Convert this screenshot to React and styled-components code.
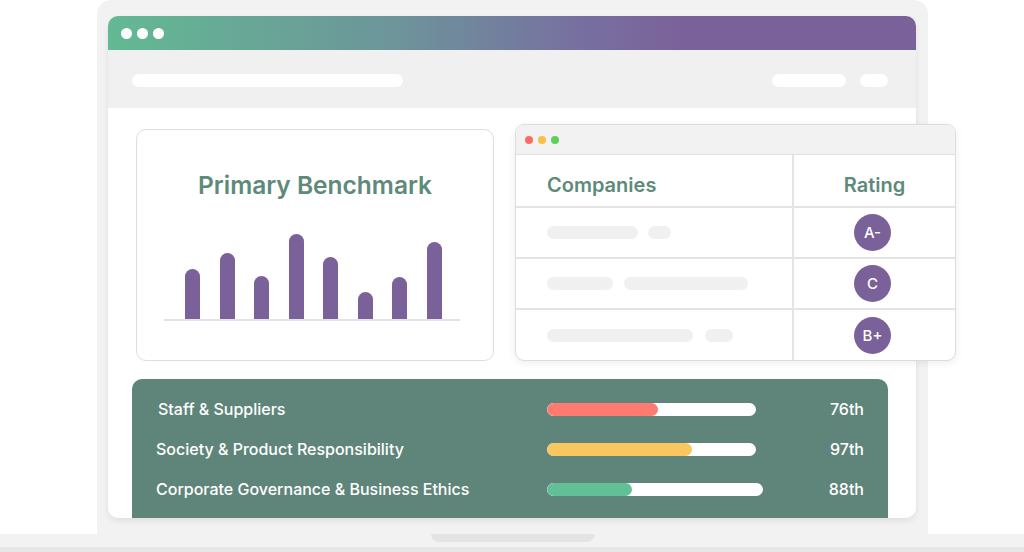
import React from 'react';
import styled, { createGlobalStyle } from 'styled-components';

const Global = createGlobalStyle`
  body {
    margin: 0;
    background: #fff;
    font-family: Inter, "Noto Sans", sans-serif;
  }
`;

const Page = styled.div`
  width: 1024px;
  height: 552px;
  overflow: hidden;
  background: #fff;
  display: flex;
  flex-direction: column;
`;

const Lid = styled.div`
  width: 831px;
  height: 534px;
  margin-left: 97px;
  box-sizing: border-box;
  padding: 16px 12px 16px 11px;
  background: #f2f2f2;
  border-radius: 14px 14px 0 0;
  display: flex;
`;

const Screen = styled.div`
  flex: 1;
  min-width: 0;
  background: #fff;
  border-radius: 10px;
  box-shadow: 0 3px 6px rgba(0, 0, 0, 0.08);
  display: flex;
  flex-direction: column;
`;

const TitleBar = styled.div`
  height: 34px;
  flex-shrink: 0;
  border-radius: 10px 10px 0 0;
  background: linear-gradient(90deg, #63b993 0%, #6d949a 36%, #7770a0 58%, #7b6199 72%, #7b6199 100%);
  display: flex;
  align-items: center;
  gap: 5px;
  padding-left: 13px;
`;

const Dot = styled.span`
  width: ${p => p.size}px;
  height: ${p => p.size}px;
  border-radius: 50%;
  background: ${p => p.color};
`;

const AddressBar = styled.div`
  height: 58px;
  flex-shrink: 0;
  box-sizing: border-box;
  background: #f0f0f0;
  display: flex;
  align-items: center;
  padding: 2px 28px 0 24px;
  gap: 14px;
`;

const Pill = styled.span`
  display: block;
  width: ${p => p.w}px;
  height: 13px;
  border-radius: 7px;
  background: ${p => p.bg || '#fff'};
  margin-right: ${p => (p.push ? 'auto' : '0')};
`;

const Content = styled.div`
  flex: 1;
  min-width: 0;
  display: flex;
  flex-direction: column;
  padding: 21px 28px 0 24px;
`;

const TopRow = styled.div`
  display: flex;
  align-items: flex-start;
  gap: 21px;
  padding-left: 4px;
`;

const ChartCard = styled.div`
  width: 358px;
  height: 232px;
  flex-shrink: 0;
  box-sizing: border-box;
  border: 1px solid #dedede;
  border-radius: 10px;
  display: flex;
  flex-direction: column;
  align-items: center;
  padding-top: 41px;
`;

const Heading = styled.h2`
  margin: 0;
  font-size: 24.5px;
  line-height: 29px;
  font-weight: 600;
  color: #5e8a7a;
`;

const Chart = styled.div`
  align-self: flex-start;
  margin: 31px 0 0 27px;
  width: 296px;
  height: 90px;
  box-sizing: border-box;
  padding: 0 18px 0 21px;
  display: flex;
  align-items: flex-end;
  justify-content: space-between;
  border-bottom: 2px solid #e3e3e3;
`;

const Bar = styled.span`
  width: 15px;
  border-radius: 8px 8px 0 0;
  background: #7b6199;
`;

const Window = styled.div`
  width: 441px;
  height: 237px;
  flex-shrink: 0;
  margin-top: -5px;
  box-sizing: border-box;
  border: 1px solid #dddddd;
  border-radius: 9px;
  background: #fff;
  overflow: hidden;
  box-shadow: 0 2px 8px rgba(0, 0, 0, 0.07);
  display: flex;
  flex-direction: column;
`;

const WindowBar = styled.div`
  height: 29px;
  flex-shrink: 0;
  background: #f2f2f2;
  border-bottom: 1px solid #e0e0e0;
  display: flex;
  align-items: center;
  gap: 5px;
  padding-left: 9px;
`;

const Table = styled.div`
  flex: 1;
  display: grid;
  grid-template-columns: 278px 1fr;
  grid-template-rows: 53px 51px 51px 1fr;
`;

const Cell = styled.div`
  display: flex;
  align-items: center;
  justify-content: ${p => (p.center ? 'center' : 'flex-start')};
  padding-left: ${p => (p.center ? '0' : '31px')};
  padding-top: ${p => (p.head ? '8px' : '0')};
  gap: ${p => p.gap || 10}px;
  border-right: ${p => (p.center ? 'none' : '2px solid #e4e4e4')};
  border-bottom: ${p => (p.last ? 'none' : '2px solid #e4e4e4')};
`;

const ColHead = styled.span`
  font-size: 20px;
  font-weight: 600;
  color: #5e8a7a;
`;

const Grade = styled.span`
  width: 37px;
  height: 37px;
  border-radius: 50%;
  background: #7b6199;
  color: #fff;
  font-size: 15px;
  font-weight: 500;
  display: flex;
  align-items: center;
  justify-content: center;
  margin-left: -4px;
`;

const ScorePanel = styled.div`
  flex: 1;
  margin-top: 18px;
  background: #5f857a;
  border-radius: 10px 10px 0 0;
  padding: 10px 24px 0 24px;
  display: flex;
  flex-direction: column;
`;

const ScoreRow = styled.div`
  height: 40px;
  display: flex;
  align-items: center;
`;

const Label = styled.span`
  width: 391px;
  padding-left: ${p => p.indent || 0}px;
  box-sizing: border-box;
  color: #fff;
  font-size: 16px;
  font-weight: 500;
`;

const Track = styled.span`
  width: ${p => p.w}px;
  height: 13px;
  border-radius: 7px;
  background: #fff;
  overflow: hidden;
  display: flex;
`;

const Fill = styled.span`
  height: 100%;
  border-radius: 7px;
  background: ${p => p.color};
`;

const Value = styled.span`
  margin-left: auto;
  color: #fff;
  font-size: 16px;
  font-weight: 500;
`;

const Base = styled.div`
  height: 18px;
  flex-shrink: 0;
  background: #f2f2f2;
  border-bottom: 5px solid #e6e6e6;
  box-sizing: border-box;
  display: flex;
  justify-content: center;
`;

const Notch = styled.span`
  width: 164px;
  height: 8px;
  margin-left: 2px;
  border-radius: 0 0 8px 8px;
  background: #e4e4e4;
`;

const bars = [50, 66, 43, 85, 62, 27, 42, 77];

const rows = [
  { pills: [91, 23], gap: 10, grade: 'A-' },
  { pills: [66, 124], gap: 11, grade: 'C' },
  { pills: [146, 28], gap: 12, grade: 'B+' },
];

const scores = [
  { label: 'Staff & Suppliers', indent: 2, track: 209, fill: 111, color: '#ff7a70', value: '76th' },
  { label: 'Society & Product Responsibility', indent: 0, track: 209, fill: 145, color: '#f9c660', value: '97th' },
  { label: 'Corporate Governance & Business Ethics', indent: 0, track: 216, fill: 85, color: '#62c097', value: '88th' },
];

export default function App() {
  return (
    <Page>
      <Global />
      <Lid>
        <Screen>
          <TitleBar>
            <Dot size={11} color="#fff" />
            <Dot size={11} color="#fff" />
            <Dot size={11} color="#fff" />
          </TitleBar>
          <AddressBar>
            <Pill w={271} push />
            <Pill w={74} />
            <Pill w={28} />
          </AddressBar>
          <Content>
            <TopRow>
              <ChartCard>
                <Heading>Primary Benchmark</Heading>
                <Chart>
                  {bars.map((h, i) => (
                    <Bar key={i} style={{ height: h }} />
                  ))}
                </Chart>
              </ChartCard>
              <Window>
                <WindowBar>
                  <Dot size={8} color="#ff6b62" />
                  <Dot size={8} color="#f9bf4a" />
                  <Dot size={8} color="#5ccf5c" />
                </WindowBar>
                <Table>
                  <Cell head>
                    <ColHead>Companies</ColHead>
                  </Cell>
                  <Cell head center>
                    <ColHead>Rating</ColHead>
                  </Cell>
                  {rows.map((r, i) => (
                    <React.Fragment key={r.grade}>
                      <Cell gap={r.gap} last={i === rows.length - 1}>
                        {r.pills.map((w, j) => (
                          <Pill key={j} w={w} bg="#f0f0f0" />
                        ))}
                      </Cell>
                      <Cell center last={i === rows.length - 1}>
                        <Grade>{r.grade}</Grade>
                      </Cell>
                    </React.Fragment>
                  ))}
                </Table>
              </Window>
            </TopRow>
            <ScorePanel>
              {scores.map(s => (
                <ScoreRow key={s.label}>
                  <Label indent={s.indent}>{s.label}</Label>
                  <Track w={s.track}>
                    <Fill color={s.color} style={{ width: s.fill }} />
                  </Track>
                  <Value>{s.value}</Value>
                </ScoreRow>
              ))}
            </ScorePanel>
          </Content>
        </Screen>
      </Lid>
      <Base>
        <Notch />
      </Base>
    </Page>
  );
}
